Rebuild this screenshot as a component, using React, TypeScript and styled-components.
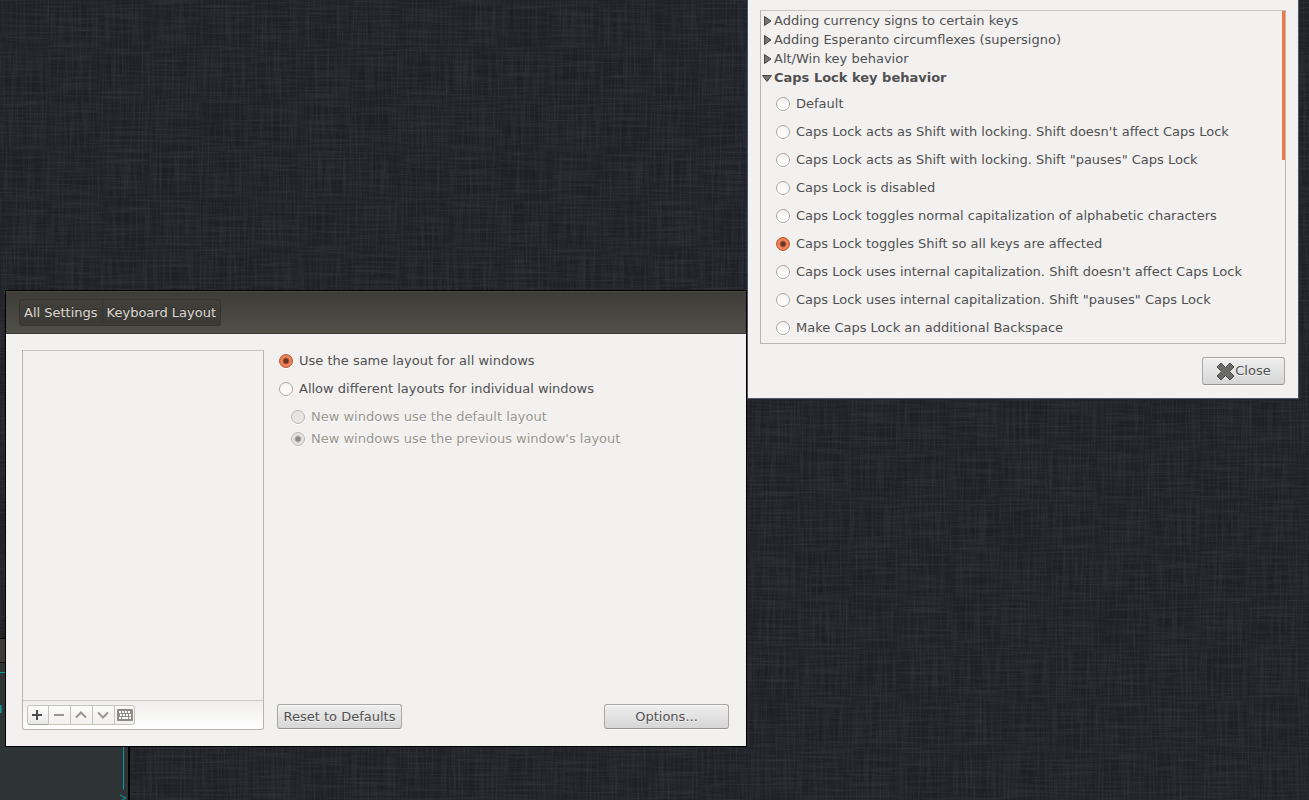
import React from "react";
import styled, { createGlobalStyle, css } from "styled-components";

const Global = createGlobalStyle`
  * { box-sizing: border-box; }
  body {
    margin: 0;
    background: #222429;
    color: #505050;
    font: 13px/18px "DejaVu Sans", sans-serif;
  }
  button, input { font: inherit; color: inherit; margin: 0; }
  ul { list-style: none; margin: 0; padding: 0; }
`;

const Desktop = styled.div`
  position: relative;
  min-height: 100vh;
  overflow: hidden;
  background: #222429;
`;

const Wallpaper = styled.svg`
  position: absolute;
  inset: 0;
  width: 100%;
  height: 100%;
`;

const Terminal = styled.div`
  position: absolute;
  left: 0;
  top: 638px;
  bottom: 0;
  width: 130px;
  display: flex;
  flex-direction: column;
  background: #2e3436;
  border: solid #000;
  border-width: 1px 2px 0 0;
`;

const TerminalTitle = styled.div`
  height: 24px;
  background: #3c3b37;
  border-bottom: 1px solid #111;
`;

const TerminalBody = styled.svg`
  display: block;
  width: 128px;
  height: 137px;
`;

const SettingsWindow = styled.section`
  position: absolute;
  left: 5px;
  top: 290px;
  bottom: 53px;
  width: 742px;
  display: flex;
  flex-direction: column;
  background: #f2f1f0;
  border: 1px solid #000;
`;

const Toolbar = styled.nav`
  display: flex;
  align-items: center;
  height: 43px;
  padding: 0 13px;
  background: linear-gradient(#3d3c38, #504f48);
  border-top: 1px solid #4b4a45;
  border-bottom: 1px solid #3a3935;
`;

const Crumb = styled.button`
  height: 27px;
  padding: 0 4px;
  border: 1px solid #35342f;
  background: linear-gradient(#403f3a, #3b3a36);
  color: #dfdbd2;
  text-shadow: 0 -1px #2a2926;
  &:first-child { border-radius: 3px 0 0 3px; }
  &:last-child { border-radius: 0 3px 3px 0; border-left: 0; }
`;

const SettingsBody = styled.div`
  flex: 1;
  display: flex;
  gap: 13px;
  padding: 16px 17px 16px 16px;
`;

const LayoutPanel = styled.div`
  display: flex;
  flex-direction: column;
  width: 242px;
  border: 1px solid #b8b5b0;
  border-top-color: #c6c4c0;
  border-radius: 0 0 3px 3px;
`;

const LayoutList = styled.div`
  flex: 1;
`;

const LayoutTools = styled.div`
  display: flex;
  height: 29px;
  padding: 4px;
  border-top: 1px solid #cfcdca;
  background: linear-gradient(#efeeed, #fff);
  border-radius: 0 0 3px 3px;
`;

const ToolButton = styled.button`
  display: flex;
  align-items: center;
  justify-content: center;
  width: 22px;
  height: 20px;
  padding: 0 1px 0 0;
  border: 1px solid #c6c2bc;
  border-left-width: 0;
  background: linear-gradient(#fbfbfb, #f1f0ef);
  color: #9a978f;
  &:first-child { border-left-width: 1px; border-radius: 3px 0 0 3px; padding-right: 2px; }
  &:last-child { border-radius: 0 3px 3px 0; width: 20px; padding: 0; }
  &:enabled {
    color: #4c4c4c;
    background: linear-gradient(#fefefe, #e8e8e7);
    border-bottom-color: #a5a19b;
  }
`;

const SettingsPane = styled.div`
  flex: 1;
  display: flex;
  flex-direction: column;
  justify-content: space-between;
  padding-bottom: 1px;
`;

const RadioGroups = styled.div`
  display: flex;
  flex-direction: column;
  gap: 6px;
`;

const ButtonRow = styled.div<{ $end?: boolean }>`
  display: flex;
  justify-content: ${(p) => (p.$end ? "flex-end" : "space-between")};
  padding-right: ${(p) => (p.$end ? 1 : 0)}px;
`;

const PushButton = styled.button<{ $tall?: boolean }>`
  display: flex;
  align-items: center;
  justify-content: center;
  width: ${(p) => (p.$tall ? 83 : 125)}px;
  height: ${(p) => (p.$tall ? 28 : 25)}px;
  padding: 0;
  border: 1px solid #a9a7a3;
  border-bottom-color: #94928e;
  border-radius: 3px;
  background: linear-gradient(#efefef, #d6d6d6);
  box-shadow: inset 0 1px #fafafa, 0 1px #fafafa;
  text-shadow: 0 1px #f5f5f5;
  white-space: nowrap;
`;

const RadioList = styled.ul<{ $indent: number; $gap?: number }>`
  display: flex;
  flex-direction: column;
  gap: ${(p) => p.$gap ?? 0}px;
  padding-left: ${(p) => p.$indent}px;
`;

const RadioLabel = styled.label<{ $off?: boolean }>`
  display: flex;
  align-items: center;
  gap: 6px;
  height: 22px;
  white-space: nowrap;
  ${(p) => p.$off && css`color: #98958e; text-shadow: 0 1px #fff;`}
`;

const RadioInput = styled.input`
  appearance: none;
  flex: none;
  width: 14px;
  height: 14px;
  border: 1px solid #aaa8a5;
  border-radius: 50%;
  background: linear-gradient(#f4f4f4, #fff);
  box-shadow: 0 1px #fff;
  &:checked {
    border-color: #b3593a;
    background: radial-gradient(circle, #6e3523 0 2px, #f58a60 4px, #f07746 6px);
  }
  &:disabled { background: #e6e5e4; border-color: #b9b7b4; }
  &:disabled:checked {
    background: radial-gradient(circle, #8c8a84 0 2px, #e6e5e4 4px);
  }
`;

const OptionsWindow = styled.section`
  position: absolute;
  left: 747px;
  right: 10px;
  top: 0;
  display: flex;
  flex-direction: column;
  gap: 13px;
  padding: 10px 12px 13px;
  background: #f2f1f0;
  border: solid #4b566b;
  border-width: 0 1px 1px;
`;

const OptionTree = styled.div`
  display: flex;
  justify-content: space-between;
  height: 334px;
  overflow: hidden;
  border: 1px solid #b8b5b0;
  border-top-color: #c6c4c0;
`;

const TreeContent = styled.div`
  flex: 1;
  display: flex;
  flex-direction: column;
`;

const TreeRow = styled.button<{ $open?: boolean }>`
  display: flex;
  align-items: center;
  gap: 2px;
  height: 19px;
  margin-bottom: ${(p) => (p.$open ? 6 : 0)}px;
  padding: 0 0 0 1px;
  border: 0;
  background: none;
  font-weight: ${(p) => (p.$open ? "bold" : "normal")};
`;

const ScrollThumb = styled.div`
  width: 3px;
  height: 149px;
  background: #f07746;
`;

function Radio(props: {
  name: string;
  text: string;
  checked?: boolean;
  disabled?: boolean;
}) {
  return (
    <li>
      <RadioLabel $off={props.disabled}>
        <RadioInput
          type="radio"
          name={props.name}
          defaultChecked={props.checked}
          disabled={props.disabled}
        />
        {props.text}
      </RadioLabel>
    </li>
  );
}

function Expander({ open }: { open?: boolean }) {
  return (
    <svg width="10" height="12" viewBox="0 0 10 12" aria-hidden="true">
      <path
        d={open ? "M0.5 3.5h9L5 9.5z" : "M2.5 1.5v9L9 6z"}
        fill="#747474"
        stroke="#454545"
      />
    </svg>
  );
}

const groups = [
  "Adding currency signs to certain keys",
  "Adding Esperanto circumflexes (supersigno)",
  "Alt/Win key behavior",
];

const capsOptions = [
  "Default",
  "Caps Lock acts as Shift with locking. Shift doesn't affect Caps Lock",
  "Caps Lock acts as Shift with locking. Shift \"pauses\" Caps Lock",
  "Caps Lock is disabled",
  "Caps Lock toggles normal capitalization of alphabetic characters",
  "Caps Lock toggles Shift so all keys are affected",
  "Caps Lock uses internal capitalization. Shift doesn't affect Caps Lock",
  "Caps Lock uses internal capitalization. Shift \"pauses\" Caps Lock",
  "Make Caps Lock an additional Backspace",
];

const tools = [
  { label: "Add layout", path: "M3 8h10M8 3v10", enabled: true },
  { label: "Remove layout", path: "M3 8h10" },
  { label: "Move up", path: "M3 10.5l5-5 5 5" },
  { label: "Move down", path: "M3 5.5l5 5 5-5" },
];

export default function App() {
  return (
    <Desktop>
      <Global />
      <Wallpaper aria-hidden="true">
        <defs>
          <filter id="weft" x="0" y="0" width="100%" height="100%" colorInterpolationFilters="sRGB">
            <feTurbulence type="fractalNoise" baseFrequency="0.02 0.5" numOctaves="3" seed="4" />
            <feColorMatrix values="0 0 0 0 0.2  0 0 0 0 0.21  0 0 0 0 0.23  1.4 0 0 0 -0.55" />
          </filter>
          <filter id="warp" x="0" y="0" width="100%" height="100%" colorInterpolationFilters="sRGB">
            <feTurbulence type="fractalNoise" baseFrequency="0.5 0.02" numOctaves="3" seed="9" />
            <feColorMatrix values="0 0 0 0 0.2  0 0 0 0 0.21  0 0 0 0 0.23  1.4 0 0 0 -0.55" />
          </filter>
        </defs>
        <rect width="100%" height="100%" fill="#1e2026" />
        <rect width="100%" height="100%" filter="url(#weft)" />
        <rect width="100%" height="100%" filter="url(#warp)" />
      </Wallpaper>

      <Terminal>
        <TerminalTitle />
        <TerminalBody aria-hidden="true" fill="none" stroke="#0b9a9b">
          <path d="M0 9.500h123.500v117M120 132l6 3-6 3" />
          <path d="M0.500 42v8" strokeWidth="2" />
        </TerminalBody>
      </Terminal>

      <SettingsWindow aria-label="Keyboard Layout">
        <Toolbar>
          <Crumb>All Settings</Crumb>
          <Crumb>Keyboard Layout</Crumb>
        </Toolbar>
        <SettingsBody>
          <LayoutPanel>
            <LayoutList />
            <LayoutTools>
              {tools.map((t) => (
                <ToolButton key={t.label} aria-label={t.label} disabled={!t.enabled}>
                  <svg width="16" height="16" fill="none" stroke="currentColor" strokeWidth="2">
                    <path d={t.path} />
                  </svg>
                </ToolButton>
              ))}
              <ToolButton aria-label="Show keyboard layout" disabled>
                <svg width="16" height="12" viewBox="0 0 16 12">
                  <rect width="16" height="12" rx="1" fill="#8f8c85" />
                  <path
                    d="M2 3h2m1 0h2m1 0h2m1 0h2M3 6h2m1 0h2m1 0h2m1 0h2M2 9h2m1 0h6m1 0h2"
                    stroke="#fff"
                    strokeWidth="2"
                  />
                </svg>
              </ToolButton>
            </LayoutTools>
          </LayoutPanel>
          <SettingsPane>
            <RadioGroups>
              <RadioList $indent={2} $gap={6}>
                <Radio name="scope" text="Use the same layout for all windows" checked />
                <Radio name="scope" text="Allow different layouts for individual windows" />
              </RadioList>
              <RadioList $indent={14}>
                <Radio name="fresh" text="New windows use the default layout" disabled />
                <Radio name="fresh" text="New windows use the previous window's layout" disabled checked />
              </RadioList>
            </RadioGroups>
            <ButtonRow>
              <PushButton>Reset to Defaults</PushButton>
              <PushButton>Options...</PushButton>
            </ButtonRow>
          </SettingsPane>
        </SettingsBody>
      </SettingsWindow>

      <OptionsWindow aria-label="Keyboard Layout Options">
        <OptionTree>
          <TreeContent>
            {groups.map((g) => (
              <TreeRow key={g}>
                <Expander />
                {g}
              </TreeRow>
            ))}
            <TreeRow $open aria-expanded="true">
              <Expander open />
              Caps Lock key behavior
            </TreeRow>
            <RadioList $indent={15} $gap={6}>
              {capsOptions.map((o, i) => (
                <Radio key={o} name="caps" text={o} checked={i === 5} />
              ))}
            </RadioList>
          </TreeContent>
          <ScrollThumb />
        </OptionTree>
        <ButtonRow $end>
          <PushButton $tall>
            <svg width="19" height="19" viewBox="0 0 19 19" aria-hidden="true">
              <path
                d="M1 5l4-4 4.500 4.500L14 1l4 4-4.500 4.500L18 14l-4 4-4.500-4.500L5 18l-4-4 4.500-4.500z"
                fill="#6a6a68"
                stroke="#4a4a48"
                strokeLinejoin="round"
              />
            </svg>
            Close
          </PushButton>
        </ButtonRow>
      </OptionsWindow>
    </Desktop>
  );
}
